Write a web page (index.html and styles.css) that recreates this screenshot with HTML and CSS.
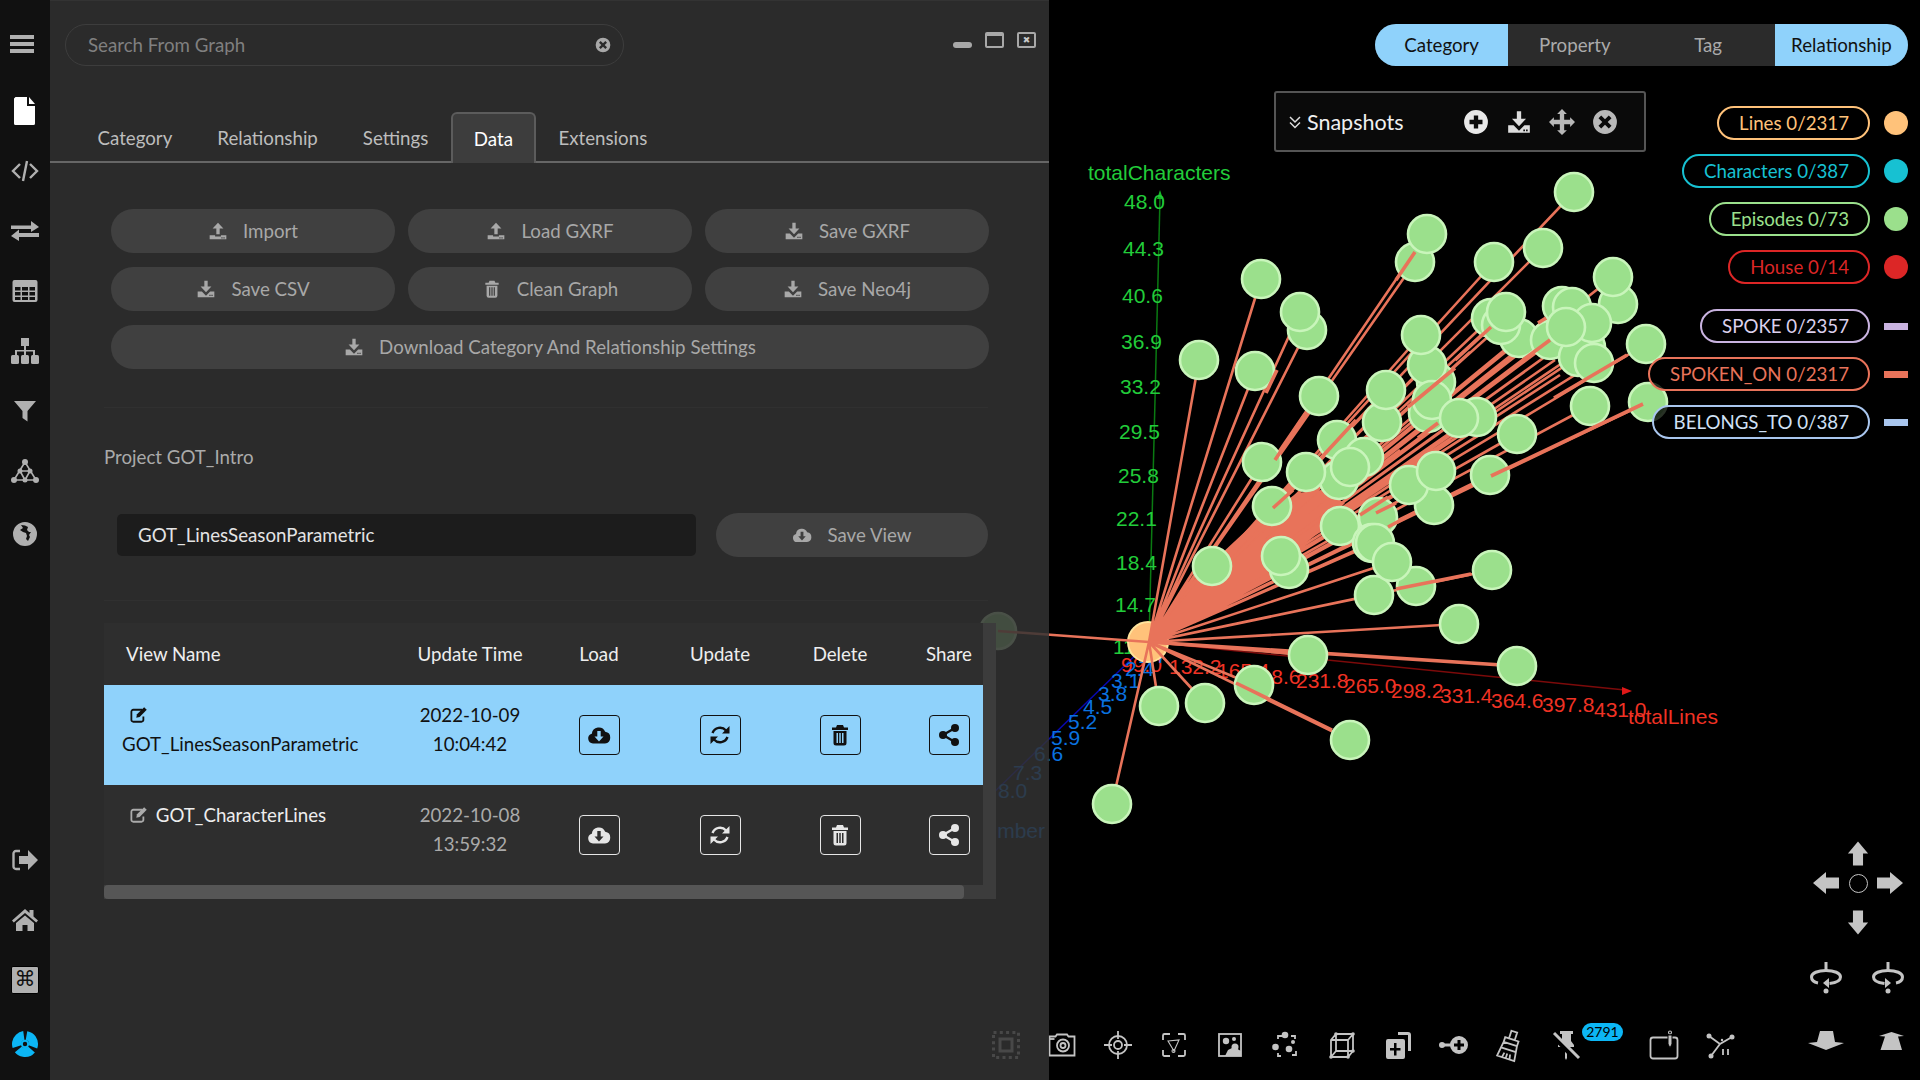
FILE: index.html
```html
<!DOCTYPE html>
<html lang="en">
<head>
  <meta charset="UTF-8">
  <title>Graph Explorer</title>
  <link rel="stylesheet" href="styles.css">
</head>
<body>
  <!-- shared icons -->
  <svg class="defs" width="0" height="0">
    <symbol id="i-upload" viewBox="0 0 24 24"><path d="M12 2l6.500 7H14v7h-4V9H5.500z"/><path fill-rule="evenodd" d="M2 17h6.500v1.500h7V17H22v5H2z M16 19.500h1.500V21H16z M18.500 19.500H20V21h-1.500z"/></symbol>
    <symbol id="i-download" viewBox="0 0 24 24"><path d="M10 2h4v7h4.500L12 16 5.500 9H10z"/><path fill-rule="evenodd" d="M2 15h5l5 5 5-5h5v7H2z M16 19h1.500v1.500H16z M18.500 19H20v1.500h-1.500z"/></symbol>
    <symbol id="i-trash" viewBox="0 0 24 24"><path fill-rule="evenodd" d="M9 2h6l1 2.500h4v2.500H4V4.500h4z M5.500 8h13v12a2.500 2.500 0 0 1-2.500 2.500H8A2.500 2.500 0 0 1 5.500 20z M8.500 10v10H10V10z M11.250 10v10h1.500V10z M14 10v10h1.500V10z"/></symbol>
    <symbol id="i-cloud" viewBox="0 0 24 24"><path fill-rule="evenodd" d="M6 20.500a5 5 0 0 1-1.200-9.800A7 7 0 0 1 18.200 8.800a5.900 5.900 0 0 1-.2 11.700z M10.300 8v5.500H7.500L12 18.500l4.500-5h-2.800V8z"/></symbol>
    <symbol id="i-refresh" viewBox="0 0 24 24"><path class="line" d="M4.500 10A8 8 0 0 1 18 7.500M19.500 14A8 8 0 0 1 6 16.500"/><path d="M21.500 3v7.500H14zM2.500 21v-7.500H10z"/></symbol>
    <symbol id="i-share" viewBox="0 0 24 24"><circle cx="18" cy="5" r="4"/><circle cx="18" cy="19" r="4"/><circle cx="6" cy="12" r="4"/><path class="line" d="M18 5L6 12l12 7"/></symbol>
    <symbol id="i-edit" viewBox="0 0 24 24"><path class="line" d="M17 5H5a2.500 2.500 0 0 0-2.500 2.500v11A2.500 2.500 0 0 0 5 21h11a2.500 2.500 0 0 0 2.500-2.500V14"/><path d="M9 15.500l1-4.500L19.500 1.500 23 5l-9.500 9.500z"/></symbol>
    <symbol id="i-xcircle" viewBox="0 0 24 24"><path fill-rule="evenodd" d="M12 1a11 11 0 1 0 0 22 11 11 0 0 0 0-22z M8.500 6L12 9.500 15.500 6 18 8.500 14.500 12 18 15.500 15.500 18 12 14.500 8.500 18 6 15.500 9.500 12 6 8.500z"/></symbol>
  </svg>

  <!-- graph canvas, sits under the translucent panel -->
  <div class="canvas">
    <svg class="graph" width="1920" height="1080" viewBox="0 0 1920 1080">
      <path class="axis-green" d="M1149 642L1160 198"/>
      <path class="axis-green-head" d="M1160 190l-3 9h6z"/>
      <path class="axis-red" d="M1149 642L1625 690"/>
      <path class="axis-red-head" d="M1632 691l-10-4v8z"/>
      <path class="axis-blue" d="M1149 642L950 835"/>
      <g class="labels green">
        <text x="1088" y="180">totalCharacters</text>
        <text x="1124" y="209">48.0</text>
        <text x="1123" y="256">44.3</text>
        <text x="1122" y="303">40.6</text>
        <text x="1121" y="349">36.9</text>
        <text x="1120" y="394">33.2</text>
        <text x="1119" y="439">29.5</text>
        <text x="1118" y="483">25.8</text>
        <text x="1116" y="526">22.1</text>
        <text x="1116" y="570">18.4</text>
        <text x="1115" y="612">14.7</text>
        <text x="1113" y="654">11.0</text>
      </g>
      <g class="labels red">
        <text x="1121" y="672">99.0</text>
        <text x="1169" y="674">132.2</text>
        <text x="1217" y="678">165.4</text>
        <text x="1248" y="684">198.6</text>
        <text x="1296" y="688">231.8</text>
        <text x="1344" y="693">265.0</text>
        <text x="1391" y="698">298.2</text>
        <text x="1440" y="703">331.4</text>
        <text x="1491" y="708">364.6</text>
        <text x="1542" y="712">397.8</text>
        <text x="1594" y="717">431.0</text>
        <text x="1628" y="724">totalLines</text>
      </g>
      <g class="labels blue">
        <text x="1138" y="663">1.7</text>
        <text x="1125" y="676">2.4</text>
        <text x="1111" y="688">3.1</text>
        <text x="1098" y="701">3.8</text>
        <text x="1083" y="714">4.5</text>
        <text x="1068" y="729">5.2</text>
        <text x="1051" y="745">5.9</text>
        <text x="1034" y="761">6.6</text>
        <text x="1013" y="780">7.3</text>
        <text x="998" y="798">8.0</text>
        <text x="1045" y="838" text-anchor="end">seasonNumber</text>
      </g>
      <circle class="node-orange" cx="1148" cy="642" r="20"/>
      <circle class="node ghost" cx="998" cy="631" r="18"/>
      <path class="wedge" d="M1150 640L1190 583L1250 527L1297 493L1321 490L1345 503L1313 537L1266 577L1190 617L1163 640Z"/>
      <path class="edges" d="M1149 642L998 631
        M1149 642L1574 192M1149 642L1427 234M1149 642L1415 262M1149 642L1543 248M1149 642L1494 262
        M1149 642L1613 277M1149 642L1618 304M1149 642L1261 279M1149 642L1300 312M1149 642L1307 330
        M1149 642L1199 360M1149 642L1255 371M1149 642L1319 396M1149 642L1421 335M1149 642L1427 365
        M1149 642L1436 382M1149 642L1491 318M1149 642L1501 325M1149 642L1519 338M1149 642L1506 312
        M1149 642L1562 306M1149 642L1572 307M1149 642L1592 323M1149 642L1586 347M1149 642L1550 340
        M1149 642L1566 327M1149 642L1578 357M1149 642L1594 363M1149 642L1646 344M1149 642L1648 402
        M1149 642L1590 406M1149 642L1517 434M1149 642L1386 390M1149 642L1432 400M1149 642L1428 413
        M1149 642L1459 418M1149 642L1477 417M1149 642L1382 422M1149 642L1337 440M1149 642L1364 457
        M1149 642L1350 467M1149 642L1262 462M1149 642L1306 472M1149 642L1339 480M1149 642L1272 506
        M1149 642L1490 475M1149 642L1436 471M1149 642L1409 485M1149 642L1434 505M1149 642L1340 526
        M1149 642L1378 517M1149 642L1372 543M1149 642L1375 543M1149 642L1392 562M1149 642L1212 566
        M1149 642L1281 556M1149 642L1289 569M1149 642L1416 586M1149 642L1374 595M1149 642L1492 570
        M1149 642L1459 624M1149 642L1308 655M1149 642L1205 703M1149 642L1159 706M1149 642L1254 685
        M1149 642L1112 804M1149 642L1350 740
        M1149 642L1540 350M1149 642L1530 345M1149 642L1520 352M1149 642L1555 360M1149 642L1480 370
        M1149 642L1470 352M1149 642L1444 395M1149 642L1560 375M1149 642L1400 450M1149 642L1450 440"/>
      <path class="edges thick" d="M1149 642L1517 666M1240 648L1308 655"/>
      <g class="nodes">
        <circle cx="1574" cy="192" r="19"/>
        <circle cx="1415" cy="262" r="19"/>
        <circle cx="1427" cy="234" r="19"/>
        <circle cx="1543" cy="248" r="19"/>
        <circle cx="1494" cy="262" r="19"/>
        <circle cx="1618" cy="304" r="19"/>
        <circle cx="1613" cy="277" r="19"/>
        <circle cx="1261" cy="279" r="19"/>
        <circle cx="1307" cy="330" r="19"/>
        <circle cx="1300" cy="312" r="19"/>
        <circle cx="1199" cy="360" r="19"/>
        <circle cx="1255" cy="371" r="19"/>
        <circle cx="1319" cy="396" r="19"/>
        <circle cx="1436" cy="382" r="19"/>
        <circle cx="1427" cy="365" r="19"/>
        <circle cx="1421" cy="335" r="19"/>
        <circle cx="1519" cy="338" r="19"/>
        <circle cx="1491" cy="318" r="19"/>
        <circle cx="1501" cy="325" r="19"/>
        <circle cx="1506" cy="312" r="19"/>
        <circle cx="1550" cy="340" r="19"/>
        <circle cx="1586" cy="347" r="19"/>
        <circle cx="1578" cy="357" r="19"/>
        <circle cx="1562" cy="306" r="19"/>
        <circle cx="1572" cy="307" r="19"/>
        <circle cx="1592" cy="323" r="19"/>
        <circle cx="1594" cy="363" r="19"/>
        <circle cx="1566" cy="327" r="19"/>
        <circle cx="1646" cy="344" r="19"/>
        <circle cx="1648" cy="402" r="19"/>
        <circle cx="1590" cy="406" r="19"/>
        <circle cx="1517" cy="434" r="19"/>
        <circle cx="1382" cy="422" r="19"/>
        <circle cx="1386" cy="390" r="19"/>
        <circle cx="1428" cy="413" r="19"/>
        <circle cx="1432" cy="400" r="19"/>
        <circle cx="1477" cy="417" r="19"/>
        <circle cx="1459" cy="418" r="19"/>
        <circle cx="1337" cy="440" r="19"/>
        <circle cx="1364" cy="457" r="19"/>
        <circle cx="1339" cy="480" r="19"/>
        <circle cx="1350" cy="467" r="19"/>
        <circle cx="1262" cy="462" r="19"/>
        <circle cx="1306" cy="472" r="19"/>
        <circle cx="1272" cy="506" r="19"/>
        <circle cx="1490" cy="475" r="19"/>
        <circle cx="1434" cy="505" r="19"/>
        <circle cx="1409" cy="485" r="19"/>
        <circle cx="1436" cy="471" r="19"/>
        <circle cx="1378" cy="517" r="19"/>
        <circle cx="1340" cy="526" r="19"/>
        <circle cx="1372" cy="543" r="19"/>
        <circle cx="1375" cy="543" r="19"/>
        <circle cx="1416" cy="586" r="19"/>
        <circle cx="1374" cy="595" r="19"/>
        <circle cx="1392" cy="562" r="19"/>
        <circle cx="1212" cy="566" r="19"/>
        <circle cx="1289" cy="569" r="19"/>
        <circle cx="1281" cy="556" r="19"/>
        <circle cx="1492" cy="570" r="19"/>
        <circle cx="1459" cy="624" r="19"/>
        <circle cx="1308" cy="655" r="19"/>
        <circle cx="1517" cy="666" r="19"/>
        <circle cx="1254" cy="685" r="19"/>
        <circle cx="1205" cy="703" r="19"/>
        <circle cx="1159" cy="706" r="19"/>
        <circle cx="1350" cy="740" r="19"/>
        <circle cx="1112" cy="804" r="19"/>
      </g>
      <path class="edges thick" d="M1306 413L1275 460M1293 490L1273 508M1415 252L1396 280M1356 420L1321 458
        M1455 368L1408 407M1491 327L1455 360M1627 355L1554 398M1643 404L1491 476M1396 589L1471 574
        M1236 683L1332 730M1360 515L1388 497M1376 513L1396 503M1388 527L1414 513M1418 438L1438 423
        M1550 340L1523 360M1538 323L1546 318M1277 370L1266 393"/>
    </svg>

    <!-- bottom toolbar -->
    <div class="toolbar">
      <svg class="tool dim" viewBox="-2 -2 32 32"><rect x="1.500" y="1.500" width="25" height="25" class="dots"/><rect x="8" y="8" width="12" height="12" class="stroke thick-stroke"/></svg>
      <svg class="tool" viewBox="-2 -2 32 32"><path class="stroke" d="M1.500 5.500h6l1.500-2h10l1.500 2h6v19h-25z"/><path class="stroke" d="M1.500 8h5"/><circle cx="15" cy="14.500" r="6" class="stroke"/><circle cx="15" cy="14.500" r="2.500" class="stroke"/></svg>
      <svg class="tool" viewBox="-1 -1 32 32"><circle cx="15" cy="15" r="9" class="stroke"/><circle cx="15" cy="15" r="4" class="stroke"/><path class="stroke" d="M15 1v8M15 21v8M1 15h8M21 15h8"/></svg>
      <svg class="tool" viewBox="-3 -3 32 32"><path class="stroke" d="M2 8V3.500a1.500 1.500 0 0 1 1.500-1.500H9M17 2h5.500A1.500 1.500 0 0 1 24 3.500V8M24 18v4.500a1.500 1.500 0 0 1-1.500 1.500H17M9 24H3.500A1.500 1.500 0 0 1 2 22.500V18"/><path class="stroke fine" d="M7 9l11-1-5 11z"/><circle cx="12.500" cy="19" r="1.500" class="stroke fine"/></svg>
      <svg class="tool" viewBox="-3 -3 32 32"><rect x="2" y="2" width="22" height="22" class="stroke"/><circle cx="9" cy="9" r="3.200" class="fill"/><circle cx="17" cy="7" r="2" class="fill"/><circle cx="18" cy="15" r="3.500" class="fill"/><path class="fill" d="M8 24l3-6 6-3 7 4v5z"/></svg>
      <svg class="tool" viewBox="-2 -2 32 32"><path class="stroke" d="M6 8V5h4M19 5h4v3M24 20v4h-4M9 25H6v-3"/><circle cx="13" cy="4" r="3.300" class="fill"/><circle cx="21" cy="11" r="2" class="fill"/><circle cx="3.500" cy="16" r="3.300" class="fill"/><circle cx="17" cy="18" r="3.300" class="fill"/></svg>
      <svg class="tool" viewBox="-2 -2 32 32"><path class="stroke" d="M3 9l5-6h17v17l-5 6H3zM3 9h17v17M20 9l5-6M8 3v17l-5 6M8 20h17"/><circle cx="3" cy="26" r="1.800" class="fill"/><circle cx="20" cy="26" r="1.800" class="fill"/><circle cx="25" cy="20" r="1.800" class="fill"/><circle cx="8" cy="3" r="1.800" class="fill"/><circle cx="25" cy="3" r="1.800" class="fill"/></svg>
      <svg class="tool" viewBox="-2 -2 32 32"><path class="stroke wide" d="M14 2.500h10a1.500 1.500 0 0 1 1.500 1.500v16"/><path class="fill" fill-rule="evenodd" d="M4 8h15a2 2 0 0 1 2 2v16a2 2 0 0 1-2 2H4a2 2 0 0 1-2-2V10a2 2 0 0 1 2-2z M10 12v5H6v2.500h4v5h2.500v-5h4V17h-4v-5z"/></svg>
      <svg class="tool" viewBox="-1 -2 32 32"><circle cx="3" cy="14" r="3" class="fill"/><path class="stroke wide" d="M3 14h10"/><path class="fill" fill-rule="evenodd" d="M20 5a9 9 0 1 1 0 18 9 9 0 0 1 0-18z M18.500 9v3.500H15v3h3.500V19h3v-3.500H25v-3h-3.500V9z"/></svg>
      <svg class="tool" viewBox="-2 -1 32 32"><g transform="rotate(18 14 15)"><path class="stroke" d="M11 1h6v8h-6zM7 9h14v5H7zM7 14L5 29h18L21 14M7 20h14M10 29l1-5M14 29v-5M18 29l-1-5"/></g></svg>
      <div class="tool-wrap">
        <svg class="tool" viewBox="-2 -1 32 32"><path class="fill" d="M8 1h13v3h-2v7l3 4v2h-7v11l-1 2-1-2V17H6v-2l4-4V4H8z"/><path class="stroke black" d="M1 5l23 24"/><path class="stroke wide" d="M2 3l25 25"/></svg>
        <span class="badge">2791</span>
      </div>
      <svg class="tool" viewBox="-1 -1 32 32"><rect x="1.500" y="7.500" width="27" height="21" rx="2.500" class="stroke"/><circle cx="21" cy="2.500" r="1.500" class="stroke fine"/><path class="fill black-edge" d="M19 5h4v9l-2 4-2-4z"/></svg>
      <svg class="tool" viewBox="-1 -1 32 32"><circle cx="4" cy="6" r="2.500" class="fill"/><circle cx="27" cy="7" r="2.500" class="fill"/><circle cx="6" cy="26" r="2.500" class="fill"/><path class="stroke" d="M4 6l11 8M27 7l-12 7L6 26"/><circle cx="17" cy="10" r="1.200" class="fill"/><path class="stroke" d="M18 19v6M23 19v6"/></svg>
    </div>

    <!-- view controls -->
    <div class="dpad">
      <svg class="arrow up" viewBox="0 0 24 26"><path d="M12 0l11 13h-5.500v13h-11V13H1z"/></svg>
      <svg class="arrow left" viewBox="0 0 26 24"><path d="M0 12L13 1v5.500h13v11H13V23z"/></svg>
      <span class="hub"></span>
      <svg class="arrow right" viewBox="0 0 26 24"><path d="M26 12L13 1v5.500H0v11h13V23z"/></svg>
      <svg class="arrow down" viewBox="0 0 24 26"><path d="M12 26L1 13h5.500V0h11v13H23z"/></svg>
    </div>
    <div class="view-row rotate">
      <svg class="tool" viewBox="0 0 32 33"><path class="stroke wide" d="M16 1v8"/><circle cx="16" cy="30" r="2.500" class="fill"/><path class="stroke wide" d="M8 22C3 21 1.500 18 1.500 16 1.500 12 8 9.500 16 9.500S30.500 12 30.500 16c0 4-6 6-11 6.500"/><path class="fill" d="M13 22l6-5v10z"/></svg>
      <svg class="tool" viewBox="0 0 32 33"><path class="stroke wide" d="M16 1v8"/><circle cx="16" cy="30" r="2.500" class="fill"/><path class="stroke wide" d="M24 22c5-1 6.500-4 6.500-6 0-4-6.500-6.500-14.500-6.500S1.500 12 1.500 16c0 4 6 6 11 6.500"/><path class="fill" d="M19 22l-6-5v10z"/></svg>
    </div>
    <div class="view-row flip">
      <svg class="flat-a" viewBox="0 0 36 19"><path d="M12 0h13l2 11 9 1-18 7L0 12l9-1z"/></svg>
      <svg class="flat-b" viewBox="0 0 25 18"><path d="M12.500 0L25 4l-6 .5L23 18H1.500L6 4.500 0 4z"/></svg>
    </div>
  </div>

  <div class="app">
    <nav class="sidebar">
      <div class="side-group">
        <a class="side-icon bars"><svg viewBox="0 0 24 24" width="24" height="24"><path d="M0 3h24v4H0zM0 10h24v4H0zM0 17h24v4H0z"/></svg></a>
        <a class="side-icon file"><svg viewBox="0 0 24 28" width="24" height="28"><path class="white" d="M2.500 0H14v9h8v17.500a1.500 1.500 0 0 1-1.500 1.500h-18A1.500 1.500 0 0 1 1 26.500V1.500z"/><path class="white" d="M16 0l6 7h-6z"/></svg></a>
        <a class="side-icon"><svg viewBox="0 0 28 24" width="28" height="24"><path class="line" d="M9 5L2 12l7 7M19 5l7 7-7 7M16 2l-4 20"/></svg></a>
        <a class="side-icon"><svg viewBox="0 0 28 24" width="28" height="24"><path d="M0 6.500h20V2l8 6-8 5V10H0zM28 14H8v-3.500l-8 6.500 8 5v-4h20z"/></svg></a>
        <a class="side-icon"><svg viewBox="0 0 26 24" width="26" height="24"><path fill-rule="evenodd" d="M2.500 1h21A2 2 0 0 1 25.500 3v18a2 2 0 0 1-2 2h-21a2 2 0 0 1-2-2V3a2 2 0 0 1 2-2z M3 8v3.500h5.500V8z M10 8v3.500h6V8z M17.500 8v3.500H23V8z M3 13v3.500h5.500V13z M10 13v3.500h6V13z M17.500 13v3.500H23V13z M3 18v3h5.500v-3z M10 18v3h6v-3z M17.500 18v3H23v-3z"/></svg></a>
        <a class="side-icon"><svg viewBox="0 0 28 26" width="28" height="26"><path d="M10 0h8v8h-3v4h9v5h-2v-3.500h-7V17h-2v-3.500H6V17H4v-5h9V8h-3z"/><rect y="17" width="8" height="9" rx="1.500"/><rect x="10" y="17" width="8" height="9" rx="1.500"/><rect x="20" y="17" width="8" height="9" rx="1.500"/></svg></a>
        <a class="side-icon"><svg viewBox="0 0 24 24" width="24" height="24"><path d="M1 2h22L14.500 12v10.500L9.500 19v-7z"/></svg></a>
        <a class="side-icon"><svg viewBox="0 0 28 26" width="28" height="26"><path class="thin" d="M14 4L3 22h22zM9 13h10l-5 9z"/><circle cx="14" cy="4" r="3"/><circle cx="3" cy="22" r="3"/><circle cx="25" cy="22" r="3"/><circle cx="14" cy="22" r="2.500"/><circle cx="9" cy="13" r="2.500"/><circle cx="19" cy="13" r="2.500"/></svg></a>
        <a class="side-icon globe"><svg viewBox="0 0 24 24" width="24" height="24"><path fill-rule="evenodd" d="M12 0a12 12 0 1 1 0 24 12 12 0 0 1 0-24z M8 3l2 3-3 2 3 2 3 1 1 3-1 3 2 2 2-4-1-2 2-3-2 0-2-2 1-3-3-1.500z"/></svg></a>
      </div>
      <div class="side-group bottom">
        <a class="side-icon"><svg viewBox="0 0 26 24" width="26" height="24"><path class="line" d="M8 3H4a2.500 2.500 0 0 0-2.500 2.500v13A2.500 2.500 0 0 0 4 21h4"/><path d="M7 8h9V2l10 10-10 10v-6H7z"/></svg></a>
        <a class="side-icon"><svg viewBox="0 0 26 24" width="26" height="24"><path d="M13 1L0 12.500 1.800 14.500 13 5l11.200 9.500L26 12.500 21.500 8.500V2h-4v3z"/><path d="M4 15L13 7.500 22 15v8h-6.500v-6h-5v6H4z"/></svg></a>
        <a class="side-icon"><span class="cmd">⌘</span></a>
        <a class="side-icon logo"><svg viewBox="0 0 28 28" width="28" height="28"><circle class="arcs" cx="14" cy="14" r="8.500" transform="rotate(280 14 14)"/><circle class="ring" cx="14" cy="14" r="3.200"/></svg></a>
      </div>
    </nav>

    <main class="panel">
      <div class="topbar">
        <div class="search">
          <span>Search From Graph</span>
          <svg width="16" height="16"><use href="#i-xcircle"/></svg>
        </div>
        <div class="win-controls">
          <span class="win-min"></span>
          <span class="win-max"></span>
          <span class="win-close">✖</span>
        </div>
      </div>

      <div class="tabs">
        <a class="tab">Category</a>
        <a class="tab">Relationship</a>
        <a class="tab">Settings</a>
        <a class="tab active">Data</a>
        <a class="tab">Extensions</a>
      </div>

      <div class="actions">
        <button><svg><use href="#i-upload"/></svg>Import</button>
        <button><svg><use href="#i-upload"/></svg>Load GXRF</button>
        <button><svg><use href="#i-download"/></svg>Save GXRF</button>
        <button><svg><use href="#i-download"/></svg>Save CSV</button>
        <button><svg><use href="#i-trash"/></svg>Clean Graph</button>
        <button><svg><use href="#i-download"/></svg>Save Neo4j</button>
        <button class="wide"><svg><use href="#i-download"/></svg>Download Category And Relationship Settings</button>
      </div>

      <hr class="rule rule-top">
      <div class="project">Project GOT_Intro</div>

      <div class="save-row">
        <div class="view-input">GOT_LinesSeasonParametric</div>
        <button><svg><use href="#i-cloud"/></svg>Save View</button>
      </div>
      <hr class="rule rule-bottom">

      <div class="table-box">
        <div class="table-clip">
          <table>
            <thead>
              <tr>
                <th class="c-name">View Name</th>
                <th class="c-date">Update Time</th>
                <th class="c-load">Load</th>
                <th class="c-update">Update</th>
                <th class="c-delete">Delete</th>
                <th class="c-share">Share</th>
              </tr>
            </thead>
            <tbody>
              <tr class="selected">
                <td class="name"><svg class="edit"><use href="#i-edit"/></svg> GOT_LinesSeasonParametric</td>
                <td class="date">2022-10-09 10:04:42</td>
                <td><a class="act"><svg><use href="#i-cloud"/></svg></a></td>
                <td><a class="act"><svg><use href="#i-refresh"/></svg></a></td>
                <td><a class="act"><svg><use href="#i-trash"/></svg></a></td>
                <td><a class="act"><svg><use href="#i-share"/></svg></a></td>
              </tr>
              <tr>
                <td class="name"><svg class="edit"><use href="#i-edit"/></svg> GOT_CharacterLines</td>
                <td class="date">2022-10-08 13:59:32</td>
                <td><a class="act"><svg><use href="#i-cloud"/></svg></a></td>
                <td><a class="act"><svg><use href="#i-refresh"/></svg></a></td>
                <td><a class="act"><svg><use href="#i-trash"/></svg></a></td>
                <td><a class="act"><svg><use href="#i-share"/></svg></a></td>
              </tr>
            </tbody>
          </table>
        </div>
        <div class="v-track"></div>
        <div class="h-track"><span class="h-thumb"></span></div>
      </div>
    </main>
  </div>

  <!-- overlays on the canvas -->
  <div class="segments">
    <a class="seg on">Category</a>
    <a class="seg">Property</a>
    <a class="seg">Tag</a>
    <a class="seg on">Relationship</a>
  </div>

  <div class="snapshots">
    <svg class="chev" viewBox="0 0 14 14"><path d="M2 2l5 5 5-5M2 7.500l5 5 5-5"/></svg>
    <span class="snap-title">Snapshots</span>
    <div class="snap-tools">
      <svg class="plus" viewBox="0 0 24 24"><path fill-rule="evenodd" d="M12 1a11 11 0 1 0 0 22 11 11 0 0 0 0-22z M10 6h4v4h4v4h-4v4h-4v-4H6v-4h4z"/></svg>
      <svg class="save" viewBox="0 0 24 24"><use href="#i-download"/></svg>
      <svg class="move" viewBox="0 0 24 24"><path d="M12 0l4.500 4.500H14V10h5.500V7.500L24 12l-4.500 4.500V14H14v5.500h2.500L12 24l-4.500-4.500H10V14H4.500v2.500L0 12l4.500-4.500V10H10V4.500H7.500z"/></svg>
      <svg class="close" viewBox="0 0 24 24"><use href="#i-xcircle"/></svg>
    </div>
  </div>

  <div class="legend">
    <div class="legend-row lines"><span class="pill">Lines 0/2317</span><i class="dot"></i></div>
    <div class="legend-row chars"><span class="pill">Characters 0/387</span><i class="dot"></i></div>
    <div class="legend-row episodes"><span class="pill">Episodes 0/73</span><i class="dot"></i></div>
    <div class="legend-row house"><span class="pill">House 0/14</span><i class="dot"></i></div>
    <div class="legend-row spoke gap"><span class="pill">SPOKE 0/2357</span><i class="bar"></i></div>
    <div class="legend-row spoken"><span class="pill">SPOKEN_ON 0/2317</span><i class="bar"></i></div>
    <div class="legend-row belongs"><span class="pill">BELONGS_TO 0/387</span><i class="bar"></i></div>
  </div>
</body>
</html>
```

FILE: styles.css
```css
/* General styles */
* {
  box-sizing: border-box;
}

html, body {
  margin: 0;
  height: 100%;
  overflow: hidden;
}

body {
  background-color: #000;
  color: #ddd;
  font-family: Lato, "Liberation Sans", sans-serif;
  font-size: 18.7px;
}

.defs {
  position: absolute;
}

.line {
  fill: none;
  stroke: currentColor;
  stroke-width: 2.4;
}

/* App shell */
.app {
  position: relative;
  display: flex;
  width: 1049px;
  height: 1080px;
}

.sidebar {
  width: 50px;
  flex: none;
  display: flex;
  flex-direction: column;
  justify-content: space-between;
  padding: 14px 0 6px;
  background-color: #111;
  color: #b0b0b0;
}

.side-icon {
  display: flex;
  align-items: center;
  justify-content: center;
  height: 60px;
}

.side-icon svg {
  fill: currentColor;
}

.side-icon.bars {
  margin-right: 6px;
}

.side-icon.file {
  margin-top: 7px;
}

.side-icon.globe {
  margin-top: 3px;
}

.side-icon .white {
  fill: #fff;
}

.side-icon .thin {
  fill: none;
  stroke: currentColor;
  stroke-width: 1.6;
}

.side-icon.logo {
  margin-top: 4px;
}

.logo .arcs {
  fill: none;
  stroke: #0cb6f5;
  stroke-width: 9;
  stroke-dasharray: 14.800 3;
}

.logo .ring {
  fill: #111;
  stroke: #0cb6f5;
  stroke-width: 2;
}

.cmd {
  display: block;
  width: 28px;
  height: 28px;
  background-color: #b0b0b0;
  border: 1px solid #000;
  border-radius: 2px;
  color: #111;
  font-family: "DejaVu Sans", sans-serif;
  font-size: 21px;
  line-height: 25px;
  text-align: center;
}

/* Panel, translucent so the graph shows through faintly */
.panel {
  width: 999px;
  flex: none;
  background-color: rgba(51, 51, 51, 0.85);
  border-top: 1px solid #333;
}

.topbar {
  display: flex;
  justify-content: space-between;
  padding: 23px 13px 0 15px;
}

.search {
  display: flex;
  align-items: center;
  justify-content: space-between;
  width: 559px;
  height: 42px;
  padding: 0 12px 0 22px;
  border: 1px solid #3d3d3d;
  border-radius: 21px;
  color: #808080;
}

.search svg {
  fill: #a8a8a8;
}

.win-controls {
  display: flex;
  gap: 13px;
  align-items: flex-end;
  height: 16px;
  margin-top: 8px;
}

.win-min {
  width: 19px;
  height: 6px;
  background-color: #a8a8a8;
  border-radius: 3px;
}

.win-max {
  width: 19px;
  height: 16px;
  border: 2px solid #a8a8a8;
  border-top-width: 4px;
  border-radius: 2px;
}

.win-close {
  width: 19px;
  height: 16px;
  border: 2px solid #a8a8a8;
  border-radius: 2px;
  color: #c8c8c8;
  font-family: "DejaVu Sans", sans-serif;
  font-size: 9px;
  line-height: 12px;
  text-align: center;
}

.tabs {
  display: flex;
  height: 51px;
  margin-top: 46px;
  padding-left: 25px;
  border-bottom: 2px solid #666;
}

.tab {
  height: 51px;
  padding: 0 22.500px;
  color: #bdbdbd;
  line-height: 52px;
}

.tab.active {
  padding: 0 21px;
  background-color: #3d3d3d;
  border: 2px solid #5c5c5c;
  border-bottom: none;
  border-radius: 6px 6px 0 0;
  color: #fff;
  line-height: 50px;
}

button {
  display: flex;
  align-items: center;
  justify-content: center;
  gap: 15px;
  height: 44px;
  padding: 0;
  background-color: #404040;
  border: none;
  border-radius: 22px;
  color: #a8a8a8;
  font-family: inherit;
  font-size: 18.7px;
}

button svg {
  width: 20px;
  height: 20px;
  fill: currentColor;
}

.actions {
  display: grid;
  grid-template-columns: repeat(3, 284px);
  gap: 14px 13px;
  margin: 46px 0 0 61px;
}

.actions .wide {
  grid-column: span 3;
}

.rule {
  height: 1px;
  margin: 0 61px 0 54px;
  background-color: #303030;
  border: none;
}

.rule-top {
  margin-top: 38px;
}

.rule-bottom {
  margin-top: 43px;
}

.project {
  margin: 38px 0 0 54px;
  color: #aaa;
  line-height: 22px;
}

.save-row {
  display: flex;
  align-items: center;
  gap: 20px;
  margin: 45px 61px 0 67px;
}

.view-input {
  width: 579px;
  height: 42px;
  padding-left: 21px;
  background-color: #1c1c1c;
  border-radius: 5px;
  color: #e4e4e4;
  line-height: 42px;
}

.save-row button {
  width: 272px;
}

/* Views table */
.table-box {
  display: grid;
  grid-template-columns: 879px 13px;
  grid-template-rows: 262px 14px;
  width: 892px;
  margin: 22px 0 0 54px;
}

.table-clip {
  overflow: hidden;
  background-color: #2e2e2e;
}

table {
  width: 898px;
  table-layout: fixed;
  border-collapse: collapse;
}

th {
  height: 62px;
  color: #eee;
  font-weight: 400;
  text-align: center;
}

.c-name {
  width: 294px;
  padding-left: 22px;
  text-align: left;
}

.c-date {
  width: 144px;
}

.c-load {
  width: 114px;
}

.c-update {
  width: 128px;
}

.c-delete {
  width: 112px;
}

.c-share {
  width: 106px;
}

td {
  height: 100px;
  padding: 30px 0 0;
  color: #ededed;
  text-align: center;
  vertical-align: top;
}

td.name, td.date {
  padding-top: 16px;
  line-height: 29px;
}

td.name {
  padding-left: 18px;
  padding-right: 12px;
  text-align: left;
}

td.date {
  color: #aaa;
}

.edit {
  width: 19px;
  height: 18px;
  margin: 0 3px 0 7px;
  fill: #aaa;
  color: #aaa;
  vertical-align: -2px;
}

.act {
  display: inline-flex;
  align-items: center;
  justify-content: center;
  width: 41px;
  height: 40px;
  border: 1.500px solid #e6e6e6;
  border-radius: 4px;
  color: #e6e6e6;
}

.act svg {
  width: 24px;
  height: 24px;
  fill: currentColor;
}

tr.selected td {
  background-color: #8fd2fb;
  color: #111;
}

tr.selected .act {
  border-color: #111;
  color: #111;
}

tr.selected .edit {
  color: #111;
  fill: #111;
}

.v-track {
  background-color: #3c3c3c;
}

.h-track {
  grid-column: span 2;
  background-color: #3c3c3c;
}

.h-thumb {
  display: block;
  width: 860px;
  height: 14px;
  background-color: #565656;
  border-radius: 4px;
}

/* Graph canvas */
.canvas {
  position: absolute;
  inset: 0;
}

.graph {
  display: block;
}

.axis-green {
  stroke: #0a7a12;
  stroke-width: 1.5;
  fill: none;
}

.axis-green-head {
  fill: #17b528;
}

.axis-red {
  stroke: #7c0a0a;
  stroke-width: 1.5;
  fill: none;
}

.axis-red-head {
  fill: #e01818;
}

.axis-blue {
  stroke: #0808b0;
  stroke-width: 1.5;
  fill: none;
}

.labels text {
  font-family: "Liberation Sans", Arial, sans-serif;
  font-size: 21px;
}

.labels.green text {
  fill: #22cc3a;
}

.labels.red text {
  fill: #f03224;
}

.labels.blue text {
  fill: #0a72e0;
}

.node-orange {
  fill: #ffc27a;
  stroke: #ffe39c;
  stroke-width: 2;
}

.wedge {
  fill: #e8735a;
}

.edges {
  fill: none;
  stroke: #e8735a;
  stroke-width: 2.600;
}

.edges.thick {
  stroke-width: 3.600;
}

.nodes circle, .node.ghost {
  fill: #9be08c;
  stroke: #c9f5bb;
  stroke-width: 2.600;
}

/* Toolbar under the graph */
.toolbar {
  position: absolute;
  left: 990px;
  top: 1029px;
  display: flex;
  align-items: center;
}

.toolbar > svg, .tool-wrap {
  position: relative;
  width: 32px;
  height: 32px;
  margin-right: 24px;
  flex: none;
}

.toolbar > .tool-wrap {
  margin-right: 66px;
}

.tool {
  display: block;
  overflow: visible;
}

.tool-wrap .tool {
  width: 32px;
  height: 32px;
}

.stroke {
  fill: none;
  stroke: #c4c4c4;
  stroke-width: 1.800;
}

.stroke.fine {
  stroke-width: 1.100;
}

.stroke.wide {
  stroke-width: 3;
}

.stroke.black {
  stroke: #000;
  stroke-width: 6;
}

.fill {
  fill: #c4c4c4;
}

.black-edge {
  stroke: #000;
  stroke-width: 1;
}

.dots {
  fill: none;
  stroke: #c4c4c4;
  stroke-width: 3;
  stroke-dasharray: 3 3.300;
}

.thick-stroke {
  stroke-width: 3;
}

.badge {
  position: absolute;
  left: 32px;
  top: -6px;
  width: 41px;
  height: 18px;
  background-color: #0cb6f5;
  border-radius: 9px;
  color: #000;
  font-size: 14px;
  line-height: 18px;
  text-align: center;
}

/* View controls */
.dpad {
  position: absolute;
  left: 1812px;
  top: 838px;
  display: grid;
  grid-template-columns: 28px 36px 28px;
  grid-template-rows: 30px 30px 48px;
  align-items: center;
  justify-items: center;
  width: 92px;
}

.arrow {
  fill: #c4c4c4;
}

.arrow.up {
  grid-column: 2;
  width: 22px;
  height: 25px;
}

.arrow.left {
  grid-column: 1;
  grid-row: 2;
  width: 26px;
  height: 24px;
}

.hub {
  grid-column: 2;
  grid-row: 2;
  width: 19px;
  height: 19px;
  border: 1px solid #c4c4c4;
  border-radius: 50%;
}

.arrow.right {
  grid-column: 3;
  grid-row: 2;
  width: 26px;
  height: 24px;
}

.arrow.down {
  grid-column: 2;
  grid-row: 3;
  width: 22px;
  height: 25px;
}

.view-row {
  position: absolute;
  display: flex;
  align-items: center;
}

.view-row.rotate {
  left: 1810px;
  top: 961px;
  gap: 30px;
}

.view-row.rotate svg {
  width: 32px;
  height: 33px;
}

.view-row.flip {
  left: 1808px;
  top: 1031px;
  gap: 35px;
}

.flat-a {
  width: 36px;
  height: 19px;
  fill: #c4c4c4;
}

.flat-b {
  width: 25px;
  height: 18px;
  fill: #c4c4c4;
}

/* Overlays */
.segments {
  position: absolute;
  left: 1375px;
  top: 24px;
  display: flex;
  width: 533px;
  height: 42px;
  border-radius: 21px;
  overflow: hidden;
  background-color: #2b2b2b;
}

.seg {
  flex: 1;
  color: #aaa;
  line-height: 42px;
  text-align: center;
}

.seg.on {
  background-color: #8fd2fb;
  color: #111;
}

.snapshots {
  position: absolute;
  left: 1274px;
  top: 91px;
  display: flex;
  align-items: center;
  width: 372px;
  height: 61px;
  padding-left: 12px;
  background-color: #0a0a0a;
  border: 2px solid #555;
  border-radius: 3px;
}

.chev {
  width: 14px;
  height: 14px;
  fill: none;
  stroke: #ddd;
  stroke-width: 1.500;
}

.snap-title {
  margin-left: 5px;
  color: #f0f0f0;
  font-size: 21.500px;
}

.snap-tools {
  display: flex;
  align-items: center;
  gap: 17px;
  margin-left: 60px;
}

.snap-tools svg {
  width: 26px;
  height: 26px;
}

.snap-tools .plus {
  fill: #e8e8e8;
}

.snap-tools .save {
  fill: #ddd;
}

.snap-tools .move {
  fill: #b8b8b8;
}

.snap-tools .close {
  fill: #b8b8b8;
}

.legend {
  position: absolute;
  right: 12px;
  top: 106px;
  display: flex;
  flex-direction: column;
  align-items: flex-end;
  gap: 14px;
}

.legend-row {
  display: flex;
  align-items: center;
  gap: 14px;
}

.legend-row.gap {
  margin-top: 11px;
}

.pill {
  height: 34px;
  padding: 0 19px 0 20px;
  background-color: rgba(0, 0, 0, 0.8);
  border: 2px solid;
  border-radius: 17px;
  line-height: 30px;
}

.dot {
  width: 24px;
  height: 24px;
  border-radius: 50%;
  background-color: currentColor;
}

.bar {
  width: 24px;
  height: 7px;
  background-color: currentColor;
}

.lines {
  color: #ffc27a;
}

.chars {
  color: #17c1d2;
}

.episodes {
  color: #9be08c;
}

.house {
  color: #dc2626;
}

.spoke {
  color: #c9b3e0;
}

.spoken {
  color: #e8735a;
}

.belongs {
  color: #a9c6ee;
}

.spoke .pill {
  border-color: #c9b3e0;
  color: #dcd0ec;
}

.belongs .pill {
  border-color: #a9c6ee;
  color: #d0e0f6;
}
```
